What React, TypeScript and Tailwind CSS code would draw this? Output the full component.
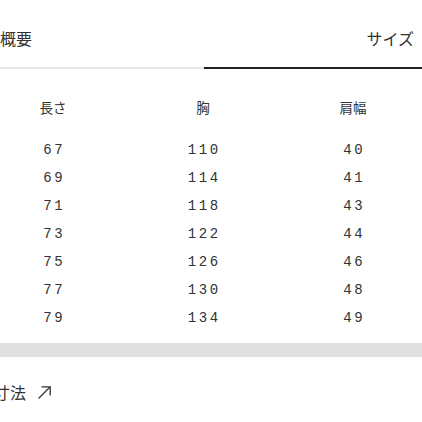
import React from 'react';

const rows: [string, string, string][] = [
  ['67', '110', '40'],
  ['69', '114', '41'],
  ['71', '118', '43'],
  ['73', '122', '44'],
  ['75', '126', '46'],
  ['77', '130', '48'],
  ['79', '134', '49'],
];

const jp = { fontFamily: '"Noto Sans CJK JP", "Noto Sans", sans-serif' };
const mono = { fontFamily: '"Liberation Mono", "DejaVu Sans Mono", monospace' };

const ArrowUpRight = () => (
  <svg width="15" height="15" viewBox="0 0 15 15" fill="none" stroke="#333" strokeWidth="1.3">
    <path d="M1.5 13.5 L13 2" />
    <path d="M4.5 1.8 H13.2 V10.5" />
  </svg>
);

export default function App() {
  return (
    <div className="w-[422px] h-[422px] bg-white overflow-hidden text-[#333]" style={jp}>
      {/* tabs */}
      <div className="flex">
        <div className="w-[204px] pt-[28px] pb-[19px] border-b-2 border-[#e8e8e8]">
          <span className="block text-[16px] leading-[20px]">概要</span>
        </div>
        <div className="flex-1 pt-[28px] pb-[19px] pr-[8px] border-b-2 border-[#222] text-right">
          <span className="block text-[16px] leading-[20px]">サイズ</span>
        </div>
      </div>

      {/* table */}
      <div className="mt-[28px] px-[3px]">
        <div className="grid grid-cols-[100px_100px_100px] gap-x-[50px] text-center text-[13.5px] leading-[20px]">
          <div>長さ</div>
          <div>胸</div>
          <div>肩幅</div>
        </div>
        <div className="mt-[19px]">
          {rows.map((r) => (
            <div
              key={r[0]}
              className="grid grid-cols-[100px_100px_100px] gap-x-[50px] text-center text-[14px] leading-[28px] h-[28px] tracking-[2.6px] text-[#333]"
              style={mono}
            >
              {r.map((v, i) => (
                <div key={i} className="pl-[2.6px]">{v}</div>
              ))}
            </div>
          ))}
        </div>
      </div>

      <div className="mt-[11px] h-[14px] bg-[#e0e0e0]" />

      <div className="mt-[25px] flex items-center gap-[11px]">
        <span className="-ml-[6px] text-[16px] leading-[20px]">寸法</span>
        <ArrowUpRight />
      </div>
    </div>
  );
}
